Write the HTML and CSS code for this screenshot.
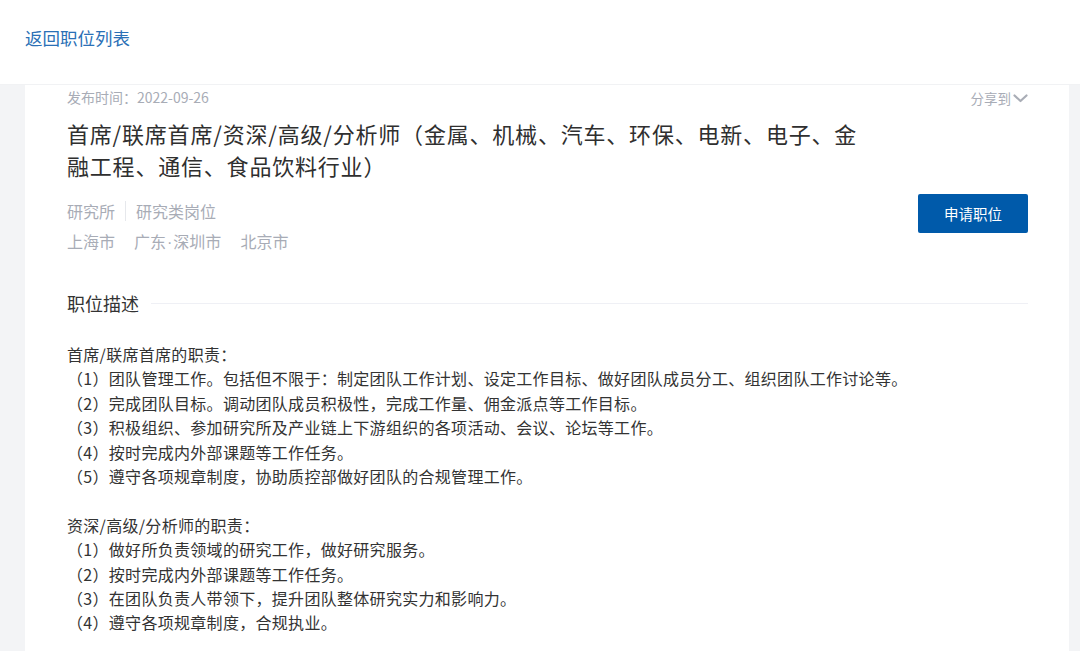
FILE: index.html
```html
<!DOCTYPE html>
<html lang="zh-CN">
<head>
<meta charset="utf-8">
<title>职位详情</title>
<link rel="stylesheet" href="styles.css">
</head>
<body>
<header class="topbar">
  <a class="back-link" href="#">返回职位列表</a>
</header>
<main class="page">
  <section class="card">
    <div class="meta-row">
      <span class="publish">发布时间：2022-09-26</span>
      <span class="share">分享到<svg class="chev" width="15" height="9" viewBox="0 0 15 9"><path d="M1.5 1.5 L7.5 7 L13.5 1.5" fill="none" stroke="#a9adb6" stroke-width="2.2" stroke-linecap="round" stroke-linejoin="round"/></svg></span>
    </div>
    <h1 class="job-title">首席/联席首席/资深/高级/分析师（金属、机械、汽车、环保、电新、电子、金融工程、通信、食品饮料行业）</h1>
    <div class="info-row">
      <div class="info">
        <div class="tags">
          <span class="tag">研究所</span>
          <span class="tag tag-sep">研究类岗位</span>
        </div>
        <div class="places">
          <span>上海市</span>
          <span>广东<span class="dot">·</span>深圳市</span>
          <span>北京市</span>
        </div>
      </div>
      <button class="apply">申请职位</button>
    </div>
    <h2 class="section-title">职位描述</h2>
    <div class="desc">
      <p>首席/联席首席的职责：<br>（1）团队管理工作。包括但不限于：制定团队工作计划、设定工作目标、做好团队成员分工、组织团队工作讨论等。<br>（2）完成团队目标。调动团队成员积极性，完成工作量、佣金派点等工作目标。<br>（3）积极组织、参加研究所及产业链上下游组织的各项活动、会议、论坛等工作。<br>（4）按时完成内外部课题等工作任务。<br>（5）遵守各项规章制度，协助质控部做好团队的合规管理工作。</p>
      <p>资深/高级/分析师的职责：<br>（1）做好所负责领域的研究工作，做好研究服务。<br>（2）按时完成内外部课题等工作任务。<br>（3）在团队负责人带领下，提升团队整体研究实力和影响力。<br>（4）遵守各项规章制度，合规执业。</p>
    </div>
  </section>
</main>
</body>
</html>
```

FILE: styles.css
```css
* { box-sizing: border-box; }
html, body { margin: 0; padding: 0; }
body {
  font-family: "Noto Sans CJK SC", "Noto Sans", sans-serif;
  background: #f3f4f6;
  color: #333;
  overflow: hidden;
}
.topbar {
  height: 85px;
  background: #fff;
  padding: 26px 0 0 25px;
  border-bottom: 1px solid #f1f2f4;
}
.back-link {
  display: inline-block;
  font-size: 17.5px;
  line-height: 24px;
  color: #2a70b6;
  text-decoration: none;
}
.page {
  min-height: 566px;
}
.card {
  margin-left: 25px;
  width: 1044px;
  min-height: 566px;
  background: #fff;
  padding: 2px 41px 0 42px;
}
.meta-row {
  display: flex;
  justify-content: space-between;
  align-items: center;
  height: 20px;
}
.publish {
  font-size: 14px;
  color: #a8acb6;
}
.share {
  display: flex;
  align-items: center;
  font-size: 13.5px;
  color: #a8acb6;
  margin-top: 2px;
}
.chev { margin-left: 2px; }
.job-title {
  margin: 10px 0 0;
  max-width: 800px;
  font-size: 22px;
  letter-spacing: 0.8px;
  line-height: 32px;
  font-weight: 400;
  color: #2f2f2f;
}
.info-row {
  display: flex;
  justify-content: space-between;
  align-items: flex-start;
  margin-top: 15px;
}
.tags, .places {
  display: flex;
  align-items: center;
  height: 30px;
  font-size: 16px;
  color: #a8acb6;
}
.tag-sep {
  margin-left: 10px;
  padding-left: 10px;
  border-left: 1px solid #e6e8ec;
  line-height: 20px;
}
.places { gap: 19px; }
.dot {
  font-family: "Liberation Sans", sans-serif;
  margin: 0 1px;
}
.apply {
  margin-top: -2px;
  width: 110px;
  height: 39px;
  border: none;
  border-radius: 2px;
  background: #005aaa;
  color: #fff;
  font-family: inherit;
  font-size: 14.5px;
  cursor: pointer;
}
.section-title {
  display: flex;
  align-items: center;
  margin: 34px 0 0;
  font-size: 18px;
  line-height: 26px;
  font-weight: 400;
  color: #333;
}
.section-title::after {
  content: "";
  flex: 1;
  height: 1px;
  margin-left: 12px;
  background: #eff0f5;
}
.desc {
  margin-top: 26px;
  font-size: 16px;
  letter-spacing: 0.3px;
  line-height: 24.4px;
  color: #333;
}
.desc p { margin: 0 0 24.4px; }
```
